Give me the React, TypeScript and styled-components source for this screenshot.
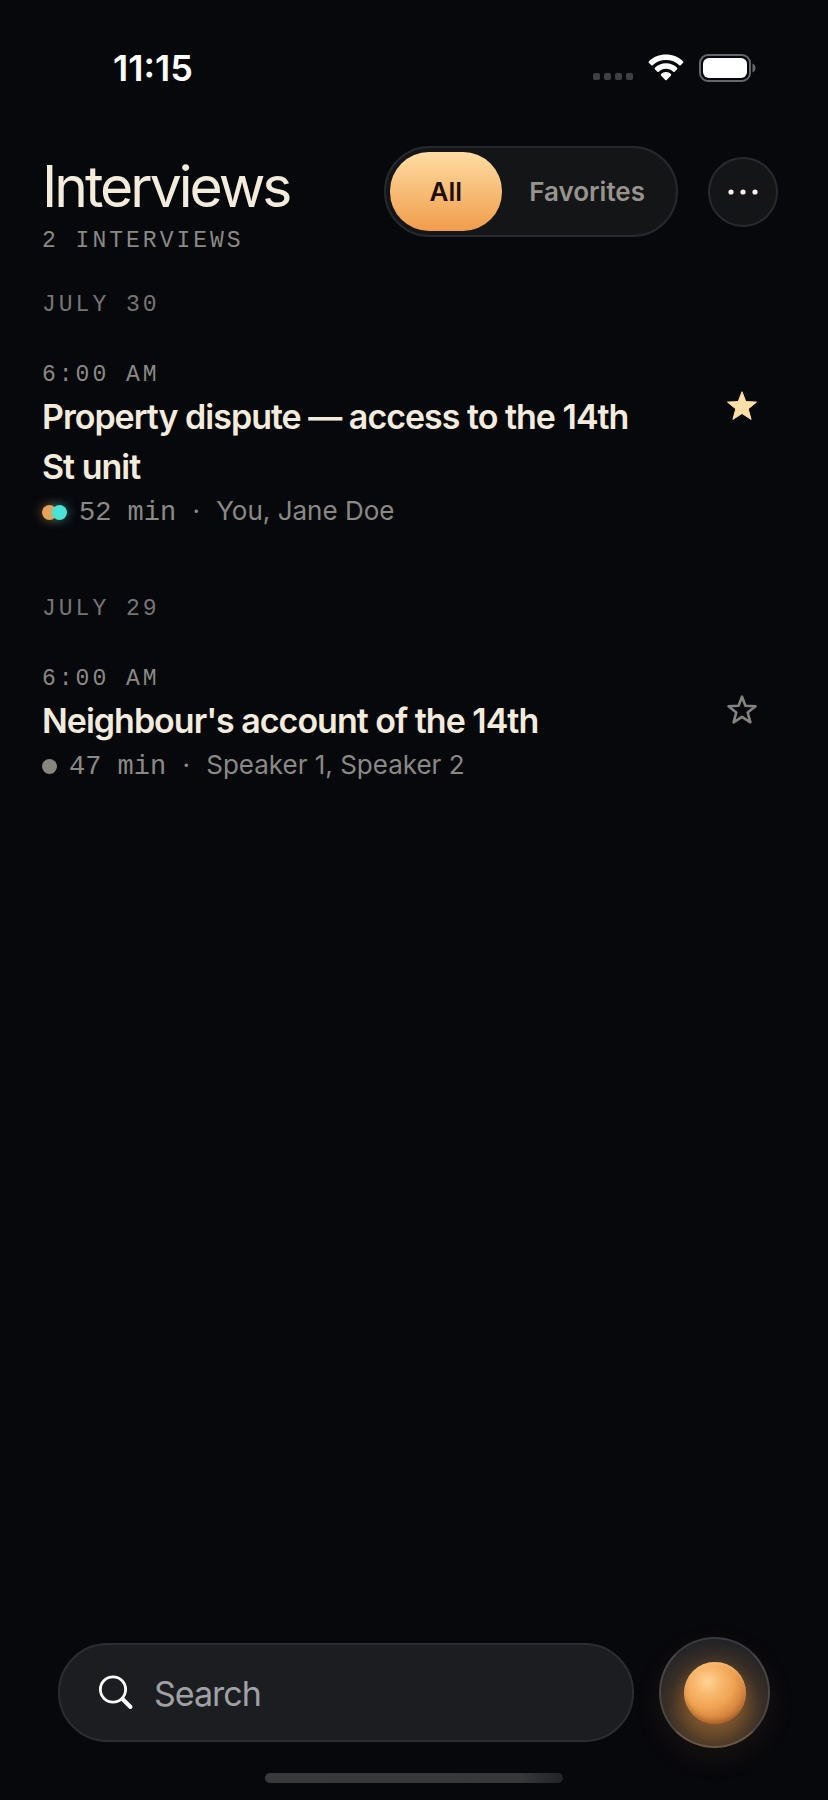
import React, { useState } from "react";
import styled, { createGlobalStyle, css } from "styled-components";

const sans = `Inter, "Liberation Sans", sans-serif`;
const mono = `"Liberation Mono", monospace`;

const GlobalStyle = createGlobalStyle`
  *, *::before, *::after { box-sizing: border-box; }
  body { margin: 0; background: #07080c; }
  button, input { font: inherit; color: inherit; }
  h1, h2, h3, p, ul { margin: 0; padding: 0; }
`;

const Screen = styled.div`
  display: flex;
  flex-direction: column;
  min-height: 100vh;
  background: #07080c;
  color: #f3ebdc;
  font-family: ${sans};
`;

const StatusBar = styled.div`
  display: flex;
  align-items: center;
  justify-content: space-between;
  height: 136px;
  padding: 0 72px 0 113px;
  color: #fff;
`;

const Clock = styled.time`
  font-size: 36px;
  font-weight: 600;
  line-height: 40px;
`;

const StatusIcons = styled.div`
  display: flex;
  align-items: center;
  gap: 15px;
`;

const Header = styled.header`
  display: flex;
  align-items: flex-start;
  justify-content: space-between;
  gap: 24px;
  padding: 10px 50px 0 42px;
`;

const Heading = styled.div`
  display: flex;
  flex-direction: column;
  gap: 8px;
  padding-top: 9px;
`;

const Title = styled.h1`
  font-size: 57px;
  font-weight: 400;
  line-height: 64px;
  letter-spacing: -3px;
`;

const label = css`
  font-family: ${mono};
  font-size: 23px;
  font-weight: 400;
  line-height: 28px;
  letter-spacing: 3px;
  text-transform: uppercase;
`;

const Count = styled.p`
  ${label}
  color: #8b8985;
`;

const Controls = styled.div`
  display: flex;
  align-items: center;
  gap: 30px;
`;

const Segmented = styled.div`
  display: flex;
  height: 91px;
  padding: 4px;
  border: 2px solid #27282d;
  border-radius: 46px;
  background: #141517;
`;

const Segment = styled.button<{ $active: boolean }>`
  padding: 0 ${(p) => (p.$active ? 40 : 27)}px;
  border: 0;
  border-radius: 39px;
  background: ${(p) => (p.$active ? "linear-gradient(#ffdca3, #f09d4b)" : "transparent")};
  color: ${(p) => (p.$active ? "#1d0f06" : "#97948e")};
  font-size: 26px;
  font-weight: 600;
  line-height: 32px;
  cursor: pointer;
`;

const MoreButton = styled.button`
  display: grid;
  place-items: center;
  width: 70px;
  height: 70px;
  padding: 0;
  border: 2px solid #292a2f;
  border-radius: 50%;
  background: #141517;
  cursor: pointer;
`;

const Main = styled.main`
  display: flex;
  flex: 1;
  flex-direction: column;
  gap: 66px;
  padding: 36px 42px 60px;
`;

const Day = styled.section`
  display: flex;
  flex-direction: column;
  gap: 42px;
`;

const DayLabel = styled.h2`
  ${label}
  color: #777572;
`;

const Row = styled.article`
  display: flex;
  align-items: flex-start;
  justify-content: space-between;
  gap: 32px;
`;

const Details = styled.div`
  display: flex;
  flex: 1;
  flex-direction: column;
  gap: 3px;
  max-width: 620px;
`;

const Time = styled.time`
  ${label}
  color: #8b8985;
`;

const RowTitle = styled.h3`
  font-size: 34px;
  font-weight: 600;
  line-height: 50px;
  letter-spacing: -1px;
`;

const Meta = styled.div`
  display: flex;
  align-items: center;
  gap: 12px;
  color: #8b8985;
  font-size: 26px;
  line-height: 32px;
`;

const Speakers = styled.span`
  display: flex;
`;

const SpeakerDot = styled.span<{ $color: string; $glow?: boolean }>`
  width: 15px;
  height: 15px;
  border-radius: 50%;
  background: ${(p) => p.$color};
  box-shadow: ${(p) => (p.$glow ? `0 0 12px ${p.$color}88` : "none")};

  & + & {
    margin-left: -5px;
  }
`;

const MetaText = styled.p`
  display: flex;
  align-items: baseline;
`;

const Duration = styled.span`
  font-family: ${mono};
  font-size: 27px;
`;

const Separator = styled.span`
  width: 40px;
  text-align: center;
`;

const StarButton = styled.button`
  display: grid;
  place-items: center;
  width: 64px;
  height: 64px;
  margin: 13px 12px 0 0;
  padding: 0;
  border: 0;
  background: none;
  cursor: pointer;
`;

const BottomBar = styled.footer`
  display: flex;
  align-items: center;
  gap: 25px;
  padding: 0 58px;
`;

const SearchBox = styled.label`
  display: flex;
  flex: 1;
  align-items: center;
  gap: 20px;
  min-width: 0;
  height: 99px;
  padding: 0 38px;
  border: 2px solid #2c2d33;
  border-radius: 50px;
  background: #1c1d20;
`;

const SearchInput = styled.input`
  flex: 1;
  min-width: 0;
  padding: 2px 0 0;
  border: 0;
  outline: 0;
  background: none;
  color: #f3ebdc;
  font-size: 34px;
  line-height: 44px;
  letter-spacing: -1px;

  &::placeholder {
    color: #a0a1a5;
    opacity: 1;
  }
`;

const RecordButton = styled.button`
  display: grid;
  place-items: center;
  width: 111px;
  height: 111px;
  padding: 0;
  border: 2px solid;
  border-color: #3a3b3f #4a4644 #6a5845;
  border-radius: 50%;
  background: radial-gradient(circle at 50% 64%, #80592f 0, #654729 32%, #3b3027 54%, #232326 76%);
  box-shadow: 0 10px 30px rgba(240, 157, 75, 0.08);
  cursor: pointer;
`;

const Orb = styled.span`
  width: 62px;
  height: 62px;
  border-radius: 50%;
  background: radial-gradient(circle at 38% 32%, #ffd495 0, #f9b970 22%, #f0a352 46%, #cb7d3a 72%, #8a4a1e 100%);
  box-shadow:
    inset 0 2px 3px rgba(255, 205, 140, 0.5),
    inset 0 -3px 4px rgba(130, 65, 20, 0.4),
    0 4px 16px rgba(240, 157, 75, 0.16);
`;

const HomeIndicator = styled.div`
  width: 36%;
  height: 10px;
  margin: 25px auto 17px;
  border-radius: 5px;
  background: linear-gradient(90deg, #38393b 0, #363739 86%, #222326 100%);
`;

const SignalIcon = () => (
  <svg width="40" height="30" viewBox="0 0 40 30" fill="#3f4044" aria-hidden="true">
    {[0, 11, 22, 33].map((x) => (
      <rect key={x} x={x} y="20" width="7" height="7" rx="2" />
    ))}
  </svg>
);

const WifiIcon = () => (
  <svg width="36" height="28" viewBox="0 0 36 28" fill="#fff" aria-hidden="true">
    <path d="M18 .5C11.300.5 5.200 3.100.8 7.400c-.4.4-.4 1 0 1.400l2.500 2.500c.4.4 1 .4 1.400 0C8.200 8 12.800 6.100 18 6.100s9.800 1.900 13.300 5.200c.4.4 1 .4 1.400 0l2.500-2.500c.4-.4.4-1 0-1.400C30.800 3.100 24.700.5 18 .5z" />
    <path d="M18 9.300c-4.300 0-8.200 1.700-11.100 4.500-.4.4-.4 1 0 1.400l2.500 2.500c.4.4 1 .4 1.400 0 1.900-1.800 4.400-2.900 7.200-2.900s5.300 1.100 7.200 2.900c.4.4 1 .4 1.400 0l2.500-2.500c.4-.4.4-1 0-1.400C26.200 11 22.300 9.300 18 9.300z" />
    <path d="M18 18c-1.900 0-3.700.7-5 2-.4.4-.4 1 0 1.400l4.300 4.500c.4.4 1 .4 1.400 0l4.300-4.500c.4-.4.4-1 0-1.400-1.300-1.300-3.100-2-5-2z" />
  </svg>
);

const BatteryIcon = () => (
  <svg width="57" height="28" viewBox="0 0 57 28" aria-hidden="true">
    <rect x="1" y="1" width="50" height="26" rx="8" fill="none" stroke="#66676a" strokeWidth="2" />
    <rect x="4" y="4" width="44" height="20" rx="6" fill="#fff" />
    <path d="M53.500 9.500c2 .8 3 2.500 3 4.500s-1 3.700-3 4.500z" fill="#66676a" />
  </svg>
);

const MoreIcon = () => (
  <svg width="30" height="6" viewBox="0 0 30 6" fill="#f5f1e8" aria-hidden="true">
    <circle cx="3" cy="3" r="2.600" />
    <circle cx="15" cy="3" r="2.600" />
    <circle cx="27" cy="3" r="2.600" />
  </svg>
);

const StarIcon = ({ filled }: { filled: boolean }) => (
  <svg width="32" height="32" viewBox="0 0 32 32" aria-hidden="true">
    {filled ? (
      <path
        d="M16 1.700 19.800 11.600 30.500 12.100 22.200 18.900 25.100 29.400 16 23.500 6.900 29.400 9.800 18.900 1.500 12.100 12.200 11.600Z"
        fill="#ffdfa8"
        stroke="#ffdfa8"
        strokeWidth="1"
        strokeLinejoin="round"
      />
    ) : (
      <path
        d="M16 2.700 19.400 11.700 29.500 12.300 21.700 18.500 24.400 28.300 16 22.900 7.600 28.300 10.300 18.500 2.500 12.300 12.600 11.700Z"
        fill="none"
        stroke="#85837e"
        strokeWidth="2.600"
        strokeLinejoin="round"
      />
    )}
  </svg>
);

const SearchIcon = () => (
  <svg width="36" height="36" viewBox="0 0 36 36" fill="none" stroke="#fff" strokeLinecap="round" aria-hidden="true">
    <circle cx="15" cy="14.500" r="12.600" strokeWidth="2.800" />
    <path d="M24.500 24 32.500 32" strokeWidth="4" />
  </svg>
);

interface Interview {
  day: string;
  time: string;
  title: string;
  duration: string;
  people: string;
  colors: string[];
  favorite: boolean;
}

const initialInterviews: Interview[] = [
  {
    day: "July 30",
    time: "6:00 AM",
    title: "Property dispute — access to the 14th St unit",
    duration: "52 min",
    people: "You, Jane Doe",
    colors: ["#eda052", "#4be3d6"],
    favorite: true,
  },
  {
    day: "July 29",
    time: "6:00 AM",
    title: "Neighbour's account of the 14th",
    duration: "47 min",
    people: "Speaker 1, Speaker 2",
    colors: ["#88867d"],
    favorite: false,
  },
];

export default function App() {
  const [filter, setFilter] = useState("All");
  const [query, setQuery] = useState("");
  const [interviews, setInterviews] = useState(initialInterviews);

  const toggle = (title: string) =>
    setInterviews((list) => list.map((i) => (i.title === title ? { ...i, favorite: !i.favorite } : i)));

  const visible = interviews.filter(
    (i) => (filter === "All" || i.favorite) && i.title.toLowerCase().includes(query.toLowerCase())
  );

  return (
    <Screen>
      <GlobalStyle />
      <StatusBar>
        <Clock>11:15</Clock>
        <StatusIcons>
          <SignalIcon />
          <WifiIcon />
          <BatteryIcon />
        </StatusIcons>
      </StatusBar>

      <Header>
        <Heading>
          <Title>Interviews</Title>
          <Count>{interviews.length} interviews</Count>
        </Heading>
        <Controls>
          <Segmented role="group" aria-label="Filter">
            {["All", "Favorites"].map((name) => (
              <Segment
                key={name}
                type="button"
                $active={filter === name}
                aria-pressed={filter === name}
                onClick={() => setFilter(name)}
              >
                {name}
              </Segment>
            ))}
          </Segmented>
          <MoreButton type="button" aria-label="More options">
            <MoreIcon />
          </MoreButton>
        </Controls>
      </Header>

      <Main>
        {visible.map((item) => (
          <Day key={item.day}>
            <DayLabel>{item.day}</DayLabel>
            <Row>
              <Details>
                <Time>{item.time}</Time>
                <RowTitle>{item.title}</RowTitle>
                <Meta>
                  <Speakers>
                    {item.colors.map((c) => (
                      <SpeakerDot key={c} $color={c} $glow={item.colors.length > 1} />
                    ))}
                  </Speakers>
                  <MetaText>
                    <Duration>{item.duration}</Duration>
                    <Separator>·</Separator>
                    <span>{item.people}</span>
                  </MetaText>
                </Meta>
              </Details>
              <StarButton
                type="button"
                aria-label="Favorite"
                aria-pressed={item.favorite}
                onClick={() => toggle(item.title)}
              >
                <StarIcon filled={item.favorite} />
              </StarButton>
            </Row>
          </Day>
        ))}
      </Main>

      <BottomBar>
        <SearchBox>
          <SearchIcon />
          <SearchInput
            type="text"
            aria-label="Search"
            placeholder="Search"
            value={query}
            onChange={(e) => setQuery(e.target.value)}
          />
        </SearchBox>
        <RecordButton type="button" aria-label="Record interview">
          <Orb />
        </RecordButton>
      </BottomBar>
      <HomeIndicator />
    </Screen>
  );
}
